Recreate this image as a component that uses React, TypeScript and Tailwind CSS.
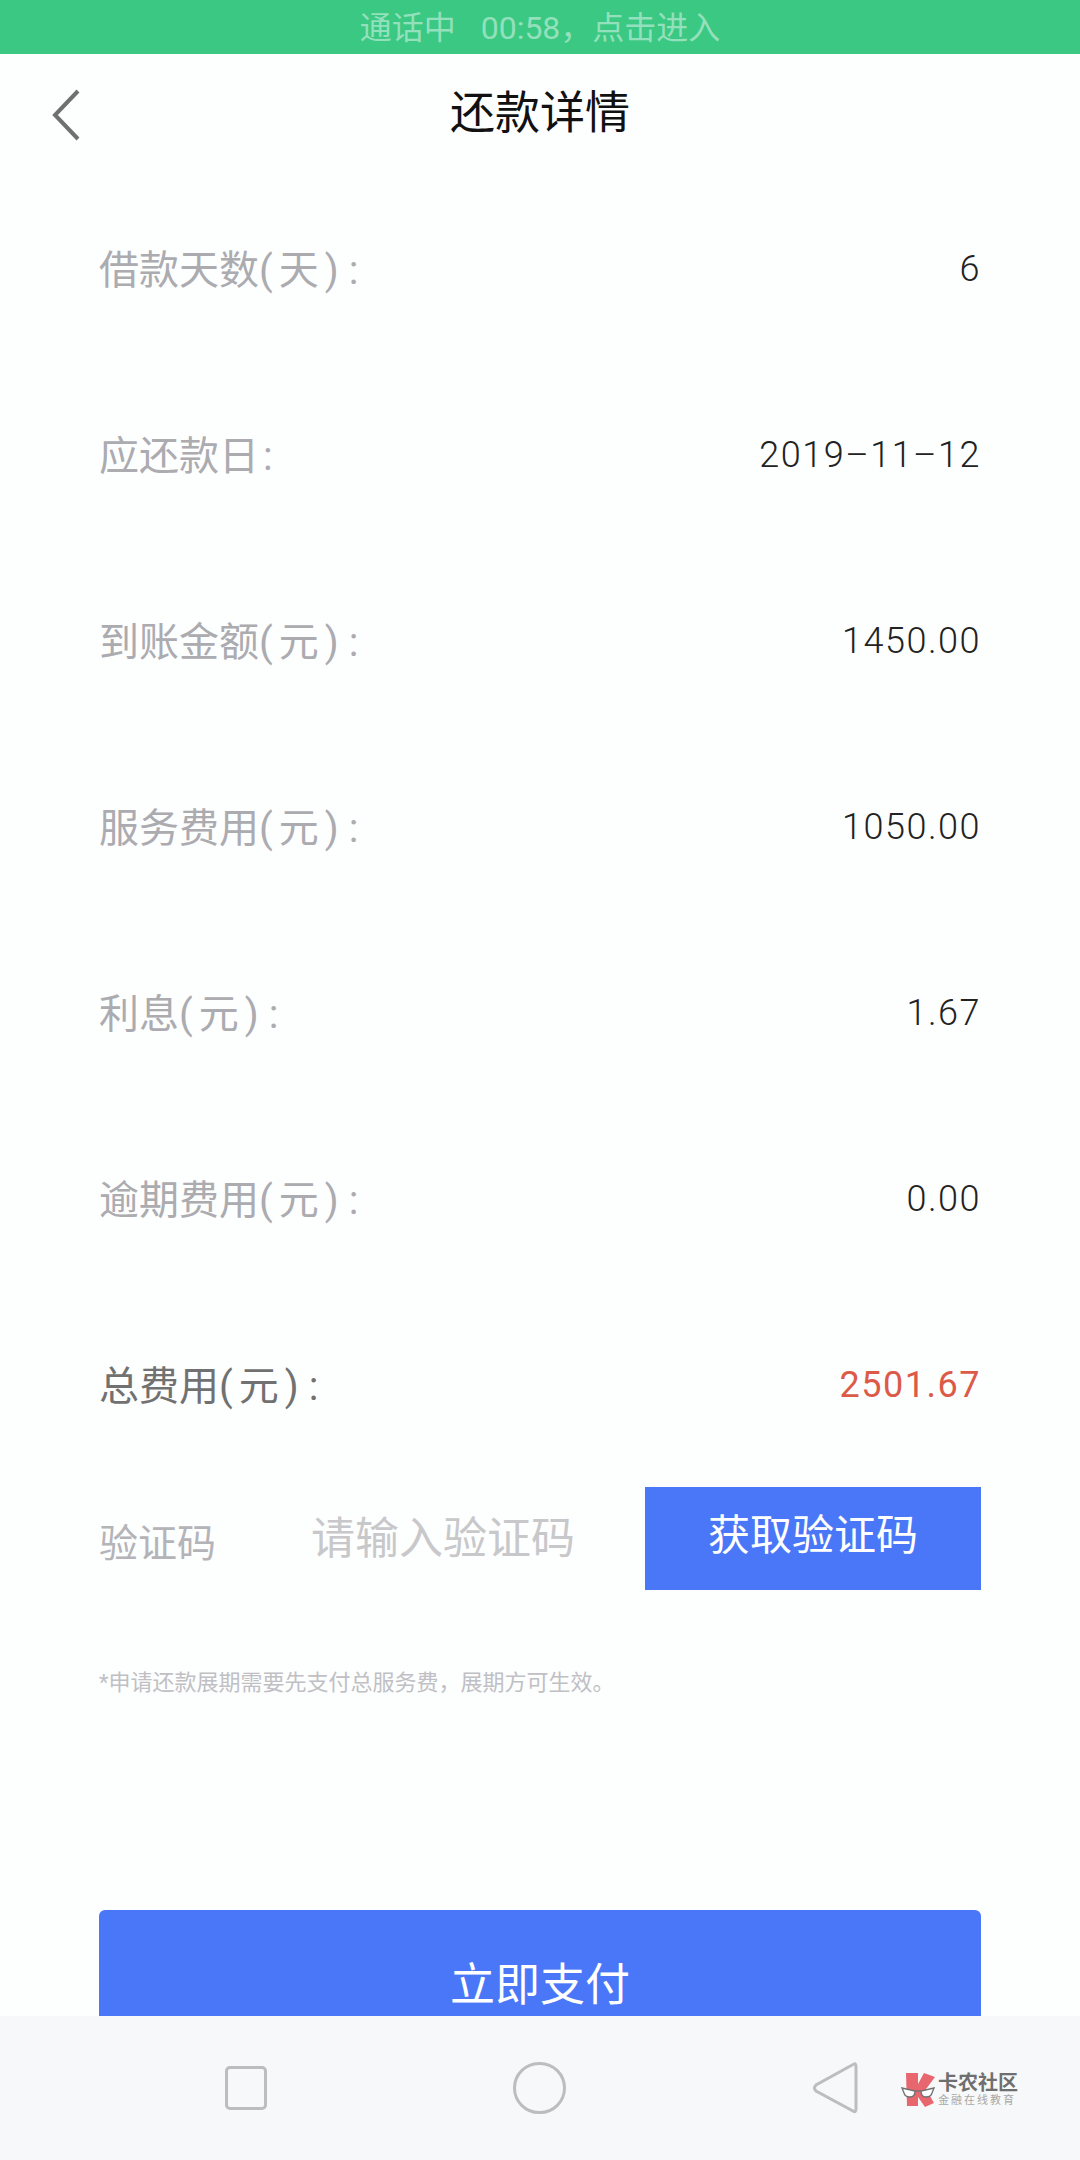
const rows = [
  { name: "借款天数", unit: "(天)", value: "6" },
  { name: "应还款日", unit: "", value: "2019–11–12" },
  { name: "到账金额", unit: "(元)", value: "1450.00" },
  { name: "服务费用", unit: "(元)", value: "1050.00" },
  { name: "利息", unit: "(元)", value: "1.67" },
  { name: "逾期费用", unit: "(元)", value: "0.00" },
];

const cjk = "font-['Roboto','Noto_Sans_CJK_SC',sans-serif]";

function RowLabel({ name, unit }: { name: string; unit: string }) {
  return (
    <span className="pt-[3px] text-[40px]">
      {name}
      <span className="tracking-[6px]">{unit}</span>
      <span className="ml-[4px]">:</span>
    </span>
  );
}

function KanongLogo() {
  return (
    <div className="flex items-center gap-[3px]">
      <svg width="34" height="34" viewBox="0 0 34 34">
        <path d="M5 0H17V11L23 0L34 4L25 16L33 30L24 34L17 24V33H6Z" fill="#e8676f" />
        <path d="M1 15L14 18Q14 24 9 24Q4 24 3 20Z" fill="#fff" stroke="#707070" strokeWidth="1.3" />
        <path d="M33 15L20 18Q20 24 25 24Q30 24 31 20Z" fill="#fff" stroke="#707070" strokeWidth="1.3" />
        <path d="M14 18H20" stroke="#707070" strokeWidth="1.3" />
      </svg>
      <div className="flex flex-col">
        <span className="text-[20px] leading-[22px] font-bold text-[#6f6f6f]">卡农社区</span>
        <span className="text-[11px] leading-[13px] tracking-[2px] text-[#a8a8a8]">金融在线教育</span>
      </div>
    </div>
  );
}

export default function App() {
  return (
    <div className={`flex h-[2160px] w-[1080px] flex-col overflow-hidden bg-[#fdfefe] ${cjk}`}>
      {/* call banner */}
      <div className="flex h-[54px] shrink-0 items-center justify-center bg-[#3bc882] pt-[2px] text-[32px] text-[#93e0bc]">
        <span>通话中</span>
        <span className="ml-[25px]">{"00:58\uFF0C点击进入"}</span>
      </div>

      {/* header */}
      <div className="relative flex h-[122px] shrink-0 items-start justify-center pt-[29px]">
        <svg className="absolute left-[50px] top-[34px]" width="32" height="54" viewBox="0 0 32 54" fill="none">
          <path d="M28 3 L5 27 L28 51" stroke="#707070" strokeWidth="4" />
        </svg>
        <span className="text-[45px] leading-[62px] text-[#111]">还款详情</span>
      </div>

      <main className="min-h-0 flex-1 overflow-hidden px-[99px]">
        {rows.map((row) => (
          <div key={row.name} className="flex h-[186px] items-center justify-between text-[#ababb0]">
            <RowLabel name={row.name} unit={row.unit} />
            <span className="text-[36px] font-light tracking-[1.5px] text-[#222]">{row.value}</span>
          </div>
        ))}
        <div className="flex h-[186px] items-center justify-between text-[#717171]">
          <RowLabel name="总费用" unit="(元)" />
          <span className="text-[36px] tracking-[1.5px] text-[#dc5a48]">2501.67</span>
        </div>

        {/* verification code */}
        <div className="mt-[9px] flex h-[103px] items-center">
          <span className="w-[212px] pt-[12px] text-[39px] text-[#b4b4b8]">验证码</span>
          <input
            placeholder="请输入验证码"
            className="h-full min-w-0 flex-1 bg-transparent text-[44px] outline-none placeholder:text-[#c8c8cb]"
          />
          <button className="h-full w-[336px] bg-[#4a77f8] pb-[6px] text-[42px] text-white">获取验证码</button>
        </div>

        <p className="mt-[77px] text-[22px] leading-[32px] text-[#c0c0c4]">{"*申请还款展期需要先支付总服务费\uFF0C展期方可生效。"}</p>

        <button className="mt-[211px] h-[146px] w-full rounded-[6px] bg-[#4a77f8] pt-[6px] text-[45px] text-white">立即支付</button>
      </main>

      {/* system navigation */}
      <nav className="relative flex h-[144px] shrink-0 items-start bg-[#f7f8f9]">
        <div className="ml-[225px] mt-[50px] h-[44px] w-[42px] rounded-[5px] border-[3px] border-[#bdbdbd]" />
        <div className="ml-[246px] mt-[46px] h-[52px] w-[53px] rounded-full border-[3px] border-[#bdbdbd]" />
        <svg className="ml-[245px] mt-[44px]" width="48" height="56" viewBox="0 0 48 56" fill="none">
          <path d="M43 4 Q45 3 45 7 L45 49 Q45 53 42 51 L5 31 Q2 28 5 25 Z" stroke="#bdbdbd" strokeWidth="3" />
        </svg>
        <div className="absolute left-[901px] top-[56px]">
          <KanongLogo />
        </div>
      </nav>
    </div>
  );
}
